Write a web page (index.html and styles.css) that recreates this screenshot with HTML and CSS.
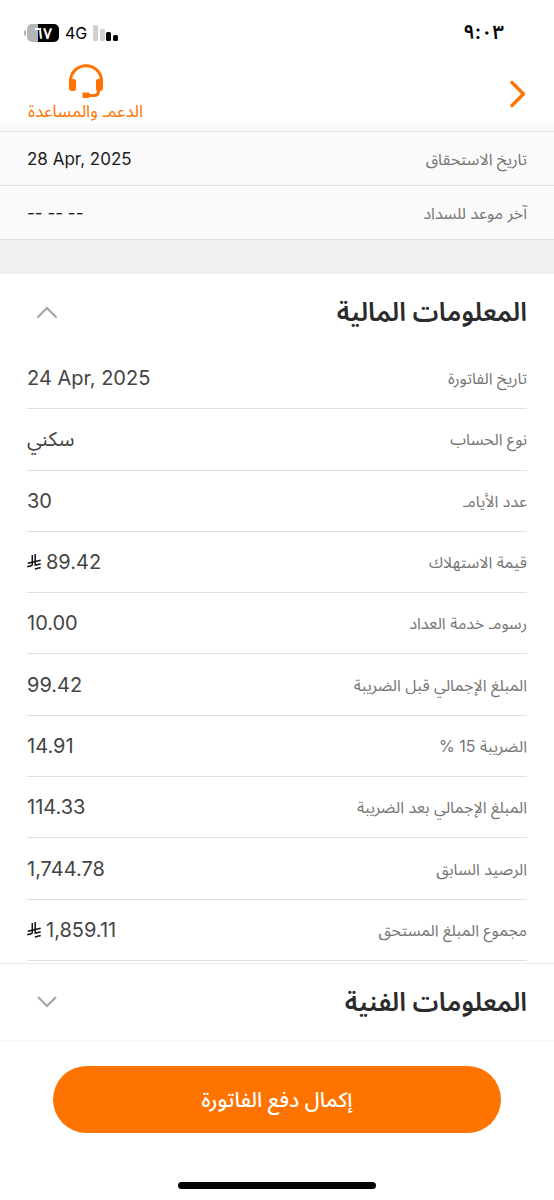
FILE: index.html
```
<!DOCTYPE html>
<html lang="ar" dir="rtl">
<head>
    <meta charset="UTF-8">
    <meta name="viewport" content="width=device-width, initial-scale=1.0">
    <title>تفاصيل الفاتورة</title>
    <link rel="stylesheet" href="styles.css">
</head>
<body>
    <!-- Riyal symbol, used next to amounts -->
    <svg class="defs" width="0" height="0" aria-hidden="true">
        <symbol id="riyal" viewBox="0 0 14 16">
            <g fill="none" stroke="currentColor" stroke-width="1.500">
                <path d="M5.300 1v9.300q0 1.200-1.200 1.500L.2 12.700"/>
                <path d="M8.200 0v11.100l5.500-1.200"/>
                <path d="M.8 9.200l12.900-2.900"/>
                <path d="M7.900 14.900l5.800-1.300"/>
            </g>
        </symbol>
    </svg>

    <div class="status-bar">
        <span class="time">٩:٠٣</span>
        <div class="status-icons">
            <svg class="signal" viewBox="0 0 26 16" width="26" height="16">
                <rect x="0" y="0" width="5" height="16" rx="1.500" fill="#cfcfcf"/>
                <rect x="7" y="4" width="5" height="12" rx="1.500" fill="#cfcfcf"/>
                <rect x="13" y="7" width="5" height="9" rx="1.500"/>
                <rect x="20" y="10" width="5" height="6" rx="1.500"/>
            </svg>
            <span class="network">4G</span>
            <span class="battery">٦٧</span>
        </div>
    </div>

    <header class="top-bar">
        <button type="button" class="back" aria-label="رجوع">
            <svg viewBox="0 0 16 28" width="16" height="28">
                <path d="M2 2.500l11.500 11.500L2 25.500" fill="none" stroke="#ff7400" stroke-width="3.400" stroke-linecap="round" stroke-linejoin="round"/>
            </svg>
        </button>
        <a href="#" class="support">
            <svg viewBox="0 0 34 34" width="34" height="34">
                <path d="M1.500 20v-3a15.500 15.300 0 0 1 31 0v3" fill="none" stroke="#ff7400" stroke-width="3"/>
                <path d="M0 15h5a2 2 0 0 1 2 2v8a2 2 0 0 1-2 2h-2a3 3 0 0 1-3-3z" fill="#ff7400"/>
                <path d="M34 15h-5a2 2 0 0 0-2 2v8a2 2 0 0 0 2 2h2a3 3 0 0 0 3-3z" fill="#ff7400"/>
                <path d="M29.500 25v2q0 4.500-4.500 4.500h-5" fill="none" stroke="#ff7400" stroke-width="3.200"/>
                <rect x="13.500" y="28.500" width="7" height="5.500" rx=".8" fill="#ff7400"/>
            </svg>
            <span>الدعمـ والمساعدة</span>
        </a>
    </header>

    <main>
        <!-- Dates -->
        <dl class="dates">
            <div class="row">
                <dt>تاريخ الاستحقاق</dt>
                <dd dir="ltr">28 Apr, 2025</dd>
            </div>
            <div class="row">
                <dt>آخر موعد للسداد</dt>
                <dd dir="ltr">-- -- --</dd>
            </div>
        </dl>

        <!-- Financial information -->
        <section class="financial">
            <button type="button" class="section-header" aria-expanded="true">
                <span>المعلومات المالية</span>
                <svg viewBox="0 0 22 14" width="22" height="14">
                    <path d="M2 12l9-9 9 9" fill="none" stroke="#a6a6a6" stroke-width="2.200" stroke-linecap="round"/>
                </svg>
            </button>
            <dl class="details">
                <div class="row">
                    <dt>تاريخ الفاتورة</dt>
                    <dd dir="ltr">24 Apr, 2025</dd>
                </div>
                <div class="row">
                    <dt>نوع الحساب</dt>
                    <dd>سكني</dd>
                </div>
                <div class="row">
                    <dt>عدد الأيامـ</dt>
                    <dd>30</dd>
                </div>
                <div class="row">
                    <dt>قيمة الاستهلاك</dt>
                    <dd class="amount">89.42 <svg class="riyal"><use href="#riyal"/></svg></dd>
                </div>
                <div class="row">
                    <dt>رسومـ خدمة العداد</dt>
                    <dd>10.00</dd>
                </div>
                <div class="row">
                    <dt>المبلغ الإجمالي قبل الضريبة</dt>
                    <dd>99.42</dd>
                </div>
                <div class="row">
                    <dt>الضريبة 15 %</dt>
                    <dd>14.91</dd>
                </div>
                <div class="row">
                    <dt>المبلغ الإجمالي بعد الضريبة</dt>
                    <dd>114.33</dd>
                </div>
                <div class="row">
                    <dt>الرصيد السابق</dt>
                    <dd>1,744.78</dd>
                </div>
                <div class="row">
                    <dt>مجموع المبلغ المستحق</dt>
                    <dd class="amount">1,859.11 <svg class="riyal"><use href="#riyal"/></svg></dd>
                </div>
            </dl>
        </section>

        <!-- Technical information (collapsed) -->
        <section class="technical">
            <button type="button" class="section-header" aria-expanded="false">
                <span>المعلومات الفنية</span>
                <svg viewBox="0 0 22 14" width="22" height="14">
                    <path d="M2 2l9 9 9-9" fill="none" stroke="#a6a6a6" stroke-width="2.200"/>
                </svg>
            </button>
        </section>
    </main>

    <footer class="pay-bar">
        <button type="button" class="pay-button">إكمال دفع الفاتورة</button>
        <div class="home-indicator"></div>
    </footer>
</body>
</html>
```
FILE: styles.css
```
* {
    margin: 0;
    padding: 0;
    box-sizing: border-box;
}

body {
    font-family: Inter, "Noto Sans Arabic", "DejaVu Sans", sans-serif;
    background-color: #fff;
    color: #444;
    min-height: 100vh;
    display: flex;
    flex-direction: column;
}

button {
    font-family: inherit;
    border: none;
    background: none;
    cursor: pointer;
}

svg {
    display: block;
    flex-shrink: 0;
}

.defs {
    position: absolute;
}

/* Status bar */
.status-bar {
    display: flex;
    justify-content: space-between;
    align-items: center;
    height: 60px;
    padding: 6px 50px 0 24px;
    color: #000;
}

.time {
    font-size: 20px;
    font-weight: 600;
}

.status-icons {
    display: flex;
    align-items: center;
    gap: 6px;
}

.signal {
    margin-right: 2px;
}

.network {
    font-size: 16px;
    line-height: 18px;
}

.battery {
    position: relative;
    width: 32px;
    height: 18px;
    margin-left: 3px;
    border-radius: 5px;
    background: linear-gradient(to right, #b5b5b5 33%, #000 33%);
    color: #fff;
    font-size: 16px;
    font-weight: 600;
    line-height: 18px;
    text-align: center;
}

.battery::before {
    content: "";
    position: absolute;
    left: -3px;
    top: 6px;
    width: 2px;
    height: 6px;
    border-radius: 2px 0 0 2px;
    background-color: #b5b5b5;
}

/* Top bar */
.top-bar {
    display: flex;
    justify-content: space-between;
    align-items: center;
    height: 64px;
    padding: 4px 28px 0;
}

.back {
    padding: 2px 0;
}

.support {
    display: flex;
    flex-direction: column;
    align-items: center;
    color: #ff7400;
    font-size: 17px;
    line-height: 26px;
    text-decoration: none;
}

main {
    flex: 1;
    display: flex;
    flex-direction: column;
}

.row {
    display: flex;
    justify-content: space-between;
    align-items: center;
}

dt {
    color: #757575;
    font-size: 16px;
    line-height: 24px;
}

dd {
    line-height: 30px;
}

/* Dates */
.dates {
    padding-top: 7px;
    background-color: #fafafa;
    border-bottom: 1px solid #dedede;
}

.dates .row {
    height: 54px;
    padding: 0 27px;
    border-top: 1px solid #dedede;
}

.dates dd {
    color: #1c1c1c;
    font-size: 17px;
}

/* Sections */
.section-header {
    display: flex;
    justify-content: space-between;
    align-items: center;
    width: 100%;
    height: 76px;
    padding: 0 27px 0 36px;
    color: #2b2b2b;
    font-size: 26px;
    font-weight: 600;
    line-height: 40px;
}

.financial {
    flex: 1;
    display: flex;
    flex-direction: column;
    border-top: 34px solid #f1f1f1;
}

.details {
    flex: 1;
    display: flex;
    flex-direction: column;
    margin: -2px 27px 2px;
}

.details .row {
    flex: 1 0 0;
    min-height: 48px;
    border-bottom: 1px solid #e0e0e0;
}

.details dd {
    font-size: 20px;
}

.amount {
    display: flex;
    align-items: center;
    gap: 5px;
}

.riyal {
    width: 14px;
    height: 16px;
    color: #111;
}

.technical {
    border-top: 1px solid #ececec;
    border-bottom: 1px solid #f7f7f7;
}

/* Pay bar */
.pay-bar {
    padding: 25px 53px 11px;
}

.pay-button {
    display: block;
    width: 100%;
    height: 67px;
    border-radius: 34px;
    background-color: #ff7400;
    color: #fff;
    font-size: 21px;
    font-weight: 500;
    line-height: 32px;
}

.home-indicator {
    width: 198px;
    height: 7px;
    margin: 49px auto 0;
    border-radius: 4px;
    background-color: #000;
}
```
